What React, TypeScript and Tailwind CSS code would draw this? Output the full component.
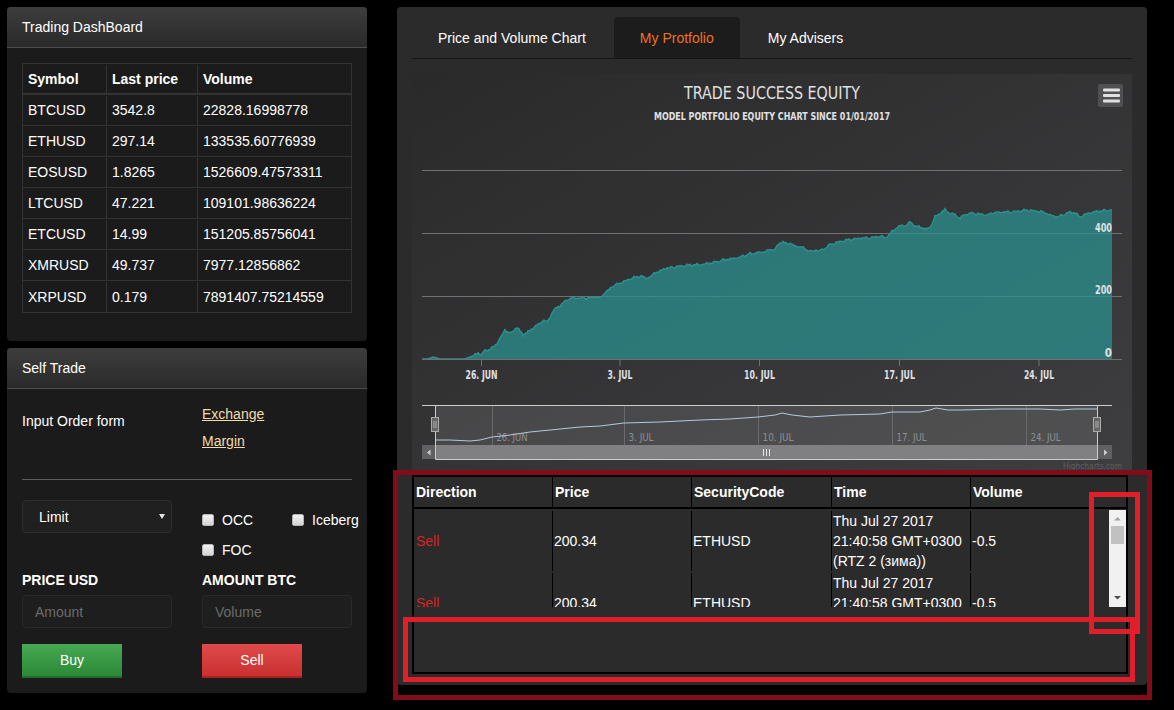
import React from 'react';

const coins = [
  ['BTCUSD', '3542.8', '22828.16998778'],
  ['ETHUSD', '297.14', '133535.60776939'],
  ['EOSUSD', '1.8265', '1526609.47573311'],
  ['LTCUSD', '47.221', '109101.98636224'],
  ['ETCUSD', '14.99', '151205.85756041'],
  ['XMRUSD', '49.737', '7977.12856862'],
  ['XRPUSD', '0.179', '7891407.75214559'],
];

// equity curve, page coordinates (chart svg uses a matching viewBox)
const equity: [number, number][] = [
  [422, 359], [428, 359], [433, 357], [437, 358], [440, 359], [465, 359], [470, 357], [475, 355],
  [478, 353], [481, 354], [485, 351], [490, 349], [495, 346], [497, 343], [501, 337], [505, 330],
  [508, 332], [512, 333], [515, 329], [517, 327], [520, 331], [523, 335], [528, 332], [533, 328],
  [540, 323], [544, 320], [547, 322], [550, 317], [553, 311], [558, 307], [563, 303], [567, 300],
  [570, 298], [580, 298], [590, 298], [595, 297], [600, 298], [605, 293], [613, 286], [620, 283],
  [628, 280], [632, 278], [637, 277], [641, 276], [646, 278], [650, 277], [655, 273], [660, 271],
  [667, 268], [675, 267], [681, 266], [690, 265], [697, 265], [705, 264], [710, 263], [717, 262],
  [723, 260], [730, 259], [737, 258], [743, 256], [750, 254], [757, 253], [763, 252], [770, 250],
  [775, 249], [780, 243], [783, 242], [786, 244], [790, 243], [795, 246], [800, 247], [803, 248],
  [808, 250], [813, 252], [816, 250], [820, 251], [825, 248], [830, 245], [838, 242], [847, 240],
  [855, 239], [862, 238], [870, 238], [876, 237], [880, 236], [885, 238], [890, 234], [897, 227],
  [902, 226], [907, 225], [910, 222], [915, 226], [920, 227], [925, 229], [928, 229], [932, 224],
  [935, 217], [940, 213], [945, 210], [950, 213], [955, 215], [960, 218], [965, 215], [970, 213],
  [978, 214], [987, 215], [993, 213], [1000, 212], [1010, 212], [1020, 211], [1027, 210], [1035, 211],
  [1043, 212], [1050, 215], [1057, 217], [1063, 215], [1070, 212], [1075, 213], [1080, 217], [1086, 214],
  [1093, 212], [1100, 211], [1112, 210],
];

const navLine: [number, number][] = [
  [435, 440], [450, 440], [470, 441], [480, 440], [492, 437], [510, 435], [530, 432], [560, 429],
  [580, 427], [600, 426], [624, 423], [660, 422], [700, 420], [730, 419], [758, 417], [775, 415],
  [782, 413], [792, 415], [810, 417], [840, 415], [880, 414], [892, 412], [920, 412], [930, 410],
  [936, 408], [948, 410], [960, 410], [1000, 409], [1040, 409], [1060, 410], [1075, 409], [1097, 409],
];

function jagged(pts: [number, number][]) {
  const out: string[] = [];
  for (let i = 0; i < pts.length - 1; i++) {
    const [x0, y0] = pts[i];
    const [x1, y1] = pts[i + 1];
    for (let x = x0; x < x1; x += 2) {
      const t = (x - x0) / (x1 - x0);
      let y = y0 + (y1 - y0) * t;
      if (y < 356) y += (Math.sin(x * 1.9) + Math.sin(x * 0.71)) * 0.7;
      out.push(`${x},${y.toFixed(1)}`);
    }
  }
  const last = pts[pts.length - 1];
  out.push(`${last[0]},${last[1]}`);
  return out;
}

const chartFont = "'Liberation Sans Narrow','DejaVu Sans Condensed','Liberation Sans',sans-serif";

function EquityChart() {
  const line = jagged(equity);
  const areaD = `M${line.join(' L')} L1112,359 L422,359 Z`;
  const lineD = `M${line.join(' L')}`;
  const navD = `M${navLine.map((p) => p.join(',')).join(' L')}`;

  const xTicks = [
    { x: 481.5, label: '26. JUN', w: 32 },
    { x: 620, label: '3. JUL', w: 25 },
    { x: 759.5, label: '10. JUL', w: 31 },
    { x: 899.5, label: '17. JUL', w: 31 },
    { x: 1039, label: '24. JUL', w: 30 },
  ];
  const navTicks = [
    { x: 492.5, label: '26. JUN', w: 31 },
    { x: 624.5, label: '3. JUL', w: 25 },
    { x: 758.5, label: '10. JUL', w: 31 },
    { x: 892.5, label: '17. JUL', w: 30 },
    { x: 1026.5, label: '24. JUL', w: 30 },
  ];

  return (
    <svg width="720" height="400" viewBox="412 74 720 400" className="block" fontFamily={chartFont}>
      <defs>
        <linearGradient id="chartBg" x1="0" y1="0" x2="1" y2="1">
          <stop offset="0" stopColor="#2a2a2b" />
          <stop offset="1" stopColor="#3e3e40" />
        </linearGradient>
      </defs>
      <rect x="412" y="74" width="720" height="400" fill="url(#chartBg)" />

      {/* Title block */}
      <text x="772" y="99.3" textAnchor="middle" fill="#e0e0e3" fontSize="18.5" textLength="176" lengthAdjust="spacingAndGlyphs">
        TRADE SUCCESS EQUITY
      </text>
      <text x="772" y="120" textAnchor="middle" fill="#e0e0e3" fontSize="10.8" fontWeight="bold" textLength="236" lengthAdjust="spacingAndGlyphs">
        MODEL PORTFOLIO EQUITY CHART SINCE 01/01/2017
      </text>

      {/* Context menu button */}
      <rect x="1098" y="84" width="25" height="23" rx="2" fill="#505053" />
      <rect x="1103" y="88.5" width="17" height="3" rx="1" fill="#e0e0e3" />
      <rect x="1103" y="94" width="17" height="3" rx="1" fill="#e0e0e3" />
      <rect x="1103" y="99.5" width="17" height="3" rx="1" fill="#e0e0e3" />

      {/* Grid */}
      <path d="M422 170.5 H1122 M422 233.5 H1122 M422 296.5 H1122" stroke="#707073" strokeWidth="1" />

      {/* Area series */}
      <path d={areaD} fill="#2b908f" fillOpacity="0.75" />
      <path d={lineD} fill="none" stroke="#2b908f" strokeWidth="1.5" />

      <path d="M422 359.5 H1122" stroke="#707073" />
      {xTicks.map((t) => (
        <g key={t.label}>
          <path d={`M${t.x} 359 V366`} stroke="#707073" />
          <text x={t.x} y="378.5" textAnchor="middle" fill="#e0e0e3" fontSize="11.5" fontWeight="bold" textLength={t.w} lengthAdjust="spacingAndGlyphs">
            {t.label}
          </text>
        </g>
      ))}

      {/* Y axis labels */}
      <text x="1112" y="231.7" textAnchor="end" fill="#e0e0e3" fontSize="11.5" fontWeight="bold" textLength="17" lengthAdjust="spacingAndGlyphs">400</text>
      <text x="1112" y="294.3" textAnchor="end" fill="#e0e0e3" fontSize="11.5" fontWeight="bold" textLength="17" lengthAdjust="spacingAndGlyphs">200</text>
      <text x="1112" y="357.3" textAnchor="end" fill="#e0e0e3" fontSize="11.5" fontWeight="bold">0</text>

      {/* Navigator */}
      <rect x="435" y="405" width="662" height="40" fill="#ffffff" fillOpacity="0.1" />
      {navTicks.map((t) => (
        <g key={t.label}>
          <path d={`M${t.x} 405 V445`} stroke="#6a6a6d" />
          <text x={t.x + 4} y="440.7" fill="#8f8f93" fontSize="10.5" textLength={t.w} lengthAdjust="spacingAndGlyphs">
            {t.label}
          </text>
        </g>
      ))}
      <path d={navD} fill="none" stroke="#b4c8e0" strokeWidth="1" />

      {/* Scrollbar */}
      <rect x="422" y="445" width="690" height="14" fill="#404043" />
      <rect x="435" y="445" width="662" height="14" fill="#808083" />
      <rect x="422" y="445" width="13" height="14" fill="#606063" />
      <rect x="1098" y="445" width="14" height="14" fill="#606063" />
      <polygon points="427,452.5 430.5,449.5 430.5,455.5" fill="#cccccc" />
      <polygon points="1107.5,452.5 1104,449.5 1104,455.5" fill="#cccccc" />
      <path d="M763.5 449 V456 M766.5 449 V456 M769.5 449 V456" stroke="#e6e6e6" />

      {/* Outline + handles */}
      <path d="M422 405.5 H1112 M435.5 405 V459.5 H1097.5 V405" fill="none" stroke="#cccccc" />
      <rect x="431.5" y="417.5" width="7" height="14" fill="#666666" stroke="#aaaaaa" />
      <path d="M434 421 V428 M436 421 V428" stroke="#aaaaaa" />
      <rect x="1093.5" y="417.5" width="7" height="14" fill="#666666" stroke="#aaaaaa" />
      <path d="M1096 421 V428 M1098 421 V428" stroke="#aaaaaa" />

      <text x="1122" y="468.5" textAnchor="end" fill="#5e5e60" fontSize="9" textLength="59" lengthAdjust="spacingAndGlyphs">
        Highcharts.com
      </text>
    </svg>
  );
}

function Panel({ title, className, children }: { title: string; className: string; children: React.ReactNode }) {
  return (
    <div className={`overflow-hidden rounded-[4px] bg-[#1b1b1b] ${className}`}>
      <div className="flex h-[41px] items-center border-b border-[#4d4d4d] bg-linear-to-b from-[#3d3d3d] to-[#2a2a2a] px-[15px]">
        {title}
      </div>
      {children}
    </div>
  );
}

function Check({ label, className = '' }: { label: string; className?: string }) {
  return (
    <label className={`flex shrink-0 items-center gap-[8px] whitespace-nowrap ${className}`}>
      <span className="h-[12px] w-[12px] rounded-[2px] border border-[#b5b5b5] bg-linear-to-b from-[#f2f2f2] to-[#d4d4d4]" />
      {label}
    </label>
  );
}

const orders = [
  { dir: 'Sell', price: '200.34', code: 'ETHUSD', vol: '-0.5' },
  { dir: 'Sell', price: '200.34', code: 'ETHUSD', vol: '-0.5' },
];

export default function App() {
  return (
    <div className="relative h-[710px] w-[1174px] overflow-hidden bg-black font-['Liberation_Sans',Arial,sans-serif] text-[14px] text-white">
      <div className="flex items-start gap-[30px] pl-[7px] pt-[7px]">
        {/* Left column */}
        <div className="flex w-[360px] flex-col gap-[7px]">
          <Panel title="Trading DashBoard" className="h-[334px]">
            <div className="px-[15px] pt-[15px]">
              <div className="border border-[#333]">
                <div className="grid h-[31px] grid-cols-[84px_91px_1fr] border-b-2 border-[#333] pt-[1px] font-bold">
                  <div className="flex items-center border-r border-[#333] px-[5px]">Symbol</div>
                  <div className="flex items-center border-r border-[#333] px-[5px]">Last price</div>
                  <div className="flex items-center px-[5px]">Volume</div>
                </div>
                {coins.map((c, i) => (
                  <div
                    key={c[0]}
                    className={`grid h-[31px] grid-cols-[84px_91px_1fr] pt-[1px] ${i < coins.length - 1 ? 'border-b border-[#333]' : ''}`}
                  >
                    <div className="flex items-center border-r border-[#333] px-[5px]">{c[0]}</div>
                    <div className="flex items-center border-r border-[#333] px-[5px]">{c[1]}</div>
                    <div className="flex items-center px-[5px]">{c[2]}</div>
                  </div>
                ))}
              </div>
            </div>
          </Panel>

          <Panel title="Self Trade" className="h-[345px]">
            <div className="px-[15px] leading-[20px]">
              <div className="grid grid-cols-2 gap-x-[30px]">
                <div className="pt-[22px]">Input Order form</div>
                <div className="flex flex-col items-start gap-[7px] pt-[15px]">
                  <a href="#" className="text-[#f3dbaa] underline">Exchange</a>
                  <a href="#" className="text-[#f3dbaa] underline">Margin</a>
                </div>
              </div>

              <div className="mt-[28px] h-px bg-[#5c5c5c]" />

              <div className="mt-[20px] grid grid-cols-2 gap-x-[30px]">
                <div className="flex h-[33px] items-center justify-between rounded-[4px] border border-[#2e2e2e] bg-[#202020] pl-[16px] pr-[6px]">
                  <span>Limit</span>
                  <svg width="6" height="5" viewBox="0 0 6 5">
                    <path d="M0 0 H6 L3 5 Z" fill="#e6e6e6" />
                  </svg>
                </div>
                <div className="flex flex-col gap-[10px] pt-[10px]">
                  <div className="flex h-[20px] items-center">
                    <Check label="OCC" className="w-[90px]" />
                    <Check label="Iceberg" />
                  </div>
                  <div className="flex h-[20px] items-center">
                    <Check label="FOC" />
                  </div>
                </div>
              </div>

              <div className="mt-[10px] grid grid-cols-2 gap-x-[30px] font-bold">
                <div>PRICE USD</div>
                <div>AMOUNT BTC</div>
              </div>

              <div className="mt-[5px] grid grid-cols-2 gap-x-[30px]">
                <input
                  placeholder="Amount"
                  className="h-[33px] rounded-[4px] border border-[#2a2a2a] bg-[#1e1e1e] px-[12px] outline-none placeholder:text-[#6b6b6b]"
                />
                <input
                  placeholder="Volume"
                  className="h-[33px] rounded-[4px] border border-[#2a2a2a] bg-[#1e1e1e] px-[12px] outline-none placeholder:text-[#6b6b6b]"
                />
              </div>

              <div className="mt-[16px] grid grid-cols-2 gap-x-[30px]">
                <button className="h-[34px] w-[100px] border-b-2 border-[#1f6e2b] bg-linear-to-b from-[#47a952] to-[#2b8937] text-white">
                  Buy
                </button>
                <button className="h-[34px] w-[100px] border-b-2 border-[#a82222] bg-linear-to-b from-[#e04a4a] to-[#c93030] text-white">
                  Sell
                </button>
              </div>
            </div>
          </Panel>
        </div>

        {/* Right panel */}
        <div className="h-[678px] w-[750px] rounded-[4px] bg-[#2b2b2b] px-[15px] pt-[10px]">
          <div className="flex h-[42px] border-b border-[#161616]">
            <div className="mr-[2px] flex h-[41px] items-center px-[26px] pt-[1px]">Price and Volume Chart</div>
            <div className="mr-[2px] flex h-[41px] items-center rounded-t-[4px] bg-[#1c1c1c] px-[26px] pt-[1px] text-[#ee7124]">
              My Protfolio
            </div>
            <div className="flex h-[41px] items-center px-[26px] pt-[1px]">My Advisers</div>
          </div>

          <div className="mt-[15px]">
            <EquityChart />
          </div>

          {/* Orders table */}
          <div className="mt-[1px] w-[716px] border-2 border-black bg-[#2b2b2b]">
            <div className="grid h-[32px] grid-cols-[139px_139px_140px_139px_1fr] border-b-2 border-black font-bold">
              <div className="flex items-center border-r border-black pl-[2px]">Direction</div>
              <div className="flex items-center border-r border-black pl-[2px]">Price</div>
              <div className="flex items-center border-r border-black pl-[2px]">SecurityCode</div>
              <div className="flex items-center border-r border-black pl-[2px]">Time</div>
              <div className="flex items-center pl-[2px]">Volume</div>
            </div>
            <div className="flex h-[98px] overflow-hidden">
              <div className="flex-1">
                {orders.map((o, i) => (
                  <div key={i} className="grid grid-cols-[139px_139px_140px_139px_1fr] pt-[2px] leading-[20px]">
                    <div className="flex items-center border-r border-black pl-[2px] text-[#d62424]">{o.dir}</div>
                    <div className="flex items-center border-r border-black pl-[1px]">{o.price}</div>
                    <div className="flex items-center border-r border-black pl-[1px]">{o.code}</div>
                    <div className="flex flex-col justify-center border-r border-black pl-[1px]">
                      <span>Thu Jul 27 2017</span>
                      <span>21:40:58 GMT+0300</span>
                      <span>(RTZ 2 (зима))</span>
                    </div>
                    <div className="flex items-center pl-[1px]">{o.vol}</div>
                  </div>
                ))}
              </div>
              {/* scrollbar */}
              <div className="relative mt-[1px] h-[97px] w-[17px] bg-[#f1f1f1]">
                <svg width="17" height="97" viewBox="0 0 17 97" className="absolute left-0 top-0">
                  <path d="M5 10.5 L12 10.5 L8.5 7 Z" fill="#a3a3a3" />
                  <rect x="2" y="16" width="13" height="18" fill="#c1c1c1" />
                  <path d="M5 86 L12 86 L8.5 89.5 Z" fill="#505050" />
                </svg>
              </div>
            </div>
            <div className="h-[65px]" />
          </div>
        </div>
      </div>

      {/* Annotation frames */}
      <div className="pointer-events-none absolute left-[393px] top-[470px] h-[230px] w-[759px] border-[5px] border-[#820c17]" />
      <div className="pointer-events-none absolute left-[403px] top-[617px] h-[65px] w-[732px] border-[5px] border-[#e11f2b]" />
      <div className="pointer-events-none absolute left-[1089px] top-[492px] h-[142px] w-[51px] border-[5px] border-[#e11f2b]" />
    </div>
  );
}
